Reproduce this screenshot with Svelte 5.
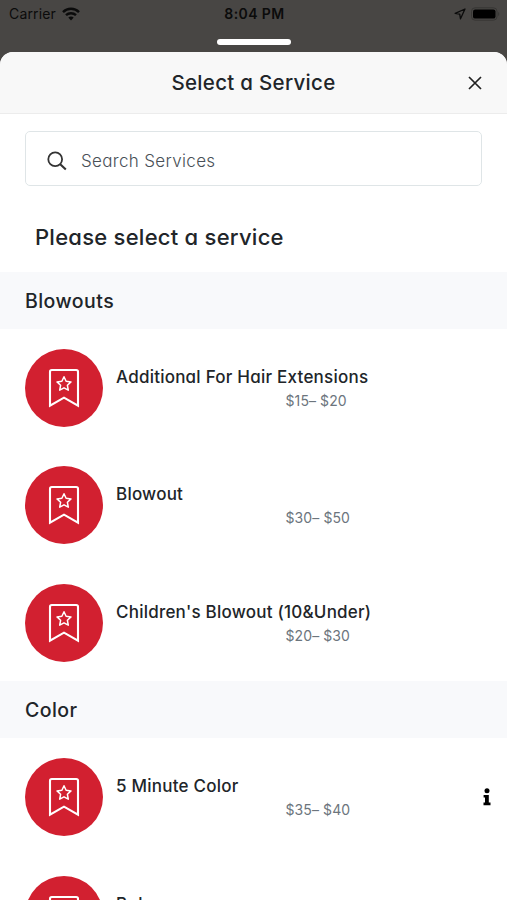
<script lang="ts">
  interface Service {
    name: string;
    price?: string;
    info?: boolean;
  }

  interface ServiceGroup {
    title: string;
    services: Service[];
  }

  const groups: ServiceGroup[] = [
    {
      title: 'Blowouts',
      services: [
        { name: 'Additional For Hair Extensions', price: '$15– $20' },
        { name: 'Blowout', price: '$30– $50' },
        { name: "Children's Blowout (10&Under)", price: '$20– $30' },
      ],
    },
    {
      title: 'Color',
      services: [
        { name: '5 Minute Color', price: '$35– $40', info: true },
        { name: 'Balayage' },
      ],
    },
  ];

  let query = $state('');
</script>

<div class="screen">
  <div class="status-bar">
    <div class="status-left">
      <span class="carrier">Carrier</span>
      <svg width="18" height="14" viewBox="0 0 18 14" fill="none" stroke="#0b0b0b" stroke-width="2.4">
        <path d="M1 5.1C5.4.6 12.6.6 17 5.1" />
        <path d="M4 8.2c2.8-2.7 7.2-2.7 10 0" />
        <path d="M9 13.4 6.3 10.6c1.5-1.4 3.9-1.4 5.4 0z" fill="#0b0b0b" stroke="none" />
      </svg>
    </div>
    <span class="clock">8:04 PM</span>
    <div class="status-right">
      <svg width="12" height="12" viewBox="0 0 12 12" fill="none" stroke="#0b0b0b" stroke-width="1.3" stroke-linejoin="round">
        <path d="M11 1 1.2 5.4l4.5.8.8 4.6z" />
      </svg>
      <svg width="29" height="14" viewBox="0 0 29 14">
        <rect x=".5" y=".8" width="25.5" height="12.4" rx="3.6" fill="none" stroke="#373634" />
        <rect x="2" y="2.4" width="22.5" height="9.2" rx="2.2" fill="#000" />
        <path d="M27.2 5v4c1.4-.7 1.4-3.3 0-4z" fill="#373634" />
      </svg>
    </div>
  </div>
  <div class="grabber"></div>

  <div class="sheet">
    <header class="sheet-header">
      <h1>Select a Service</h1>
      <button class="close" aria-label="Close">
        <svg width="14" height="14" viewBox="0 0 14 14" fill="none" stroke="#222" stroke-width="1.7">
          <path d="M1 1l12 12M13 1 1 13" />
        </svg>
      </button>
    </header>

    <label class="search">
      <svg width="20" height="20" viewBox="0 0 20 20" fill="none" stroke="#333" stroke-width="1.8">
        <circle cx="8.2" cy="8.2" r="6.9" />
        <path d="m13 13 5.8 5.6" stroke-width="2.1" />
      </svg>
      <input type="text" placeholder="Search Services" bind:value={query} />
    </label>

    <h2 class="prompt">Please select a service</h2>

    {#each groups as group}
      <h3 class="group-title">{group.title}</h3>
      {#each group.services as service}
        <div class="service">
          <div class="service-icon">
            <svg width="32" height="40" viewBox="0 0 32 40" fill="none" stroke="#fff" stroke-linejoin="round">
              <path d="M2 37.6V3.8Q2 2 3.8 2h24.4Q30 2 30 3.8v33.8L16 29.6z" stroke-width="2.1" stroke-linejoin="miter" />
              <path d="m16 8.8 2.1 4.5 4.9.6-3.6 3.4.9 4.9-4.3-2.4-4.3 2.4.9-4.9L9 13.9l4.9-.6z" stroke-width="1.5" />
            </svg>
          </div>
          <div class="service-text">
            <span class="service-name">{service.name}</span>
            {#if service.price}
              <span class="service-price">{service.price}</span>
            {/if}
          </div>
          {#if service.info}
            <svg class="info" width="8" height="18" viewBox="0 0 8 18" fill="#000">
              <circle cx="4" cy="2.8" r="2.5" />
              <path d="M.6 6.9h5.2v7.5h1.7v2.8H.5v-2.8H2V9.6H.6z" />
            </svg>
          {/if}
        </div>
      {/each}
    {/each}
  </div>
</div>

<style>
  :global(body) {
    margin: 0;
    overflow: hidden;
  }

  .screen {
    height: 900px;
    box-sizing: border-box;
    display: flex;
    flex-direction: column;
    overflow: hidden;
    background: #484644;
    color: #212529;
    font-family: Inter, 'Open Sans', sans-serif;
    font-feature-settings: 'cv11' 1, 'calt' 0;
  }

  .status-bar {
    display: grid;
    grid-template-columns: 1fr auto 1fr;
    align-items: center;
    height: 27px;
    flex-shrink: 0;
    padding: 0 7px 0 9px;
    font-size: 14px;
    color: #0b0b0b;
    font-feature-settings: normal;
  }

  .status-left, .status-right {
    display: flex;
    align-items: center;
    gap: 6px;
  }

  .carrier {
    letter-spacing: 0.15px;
  }

  .status-right {
    justify-content: flex-end;
    gap: 5px;
  }

  .clock {
    font-weight: 600;
    letter-spacing: 0.4px;
  }

  .grabber {
    width: 74px;
    height: 6px;
    flex-shrink: 0;
    margin: 12px auto 7px;
    border-radius: 3px;
    background: #fff;
  }

  .sheet {
    flex: 1;
    min-height: 0;
    overflow: hidden;
    border-radius: 13px 13px 0 0;
    background: #fff;
  }

  .sheet-header {
    display: grid;
    grid-template-columns: 40px 1fr 40px;
    align-items: center;
    height: 62px;
    box-sizing: border-box;
    padding: 0 12px;
    border-bottom: 1px solid #ececec;
    background: #f8f8f8;
  }

  h1 {
    grid-column: 2;
    margin: 0;
    text-align: center;
    font-size: 20.5px;
    font-weight: 500;
    letter-spacing: 0.3px;
  }

  .close {
    display: flex;
    justify-content: center;
    padding: 0;
    border: 0;
    background: none;
  }

  .search {
    display: flex;
    align-items: center;
    gap: 14px;
    height: 55px;
    box-sizing: border-box;
    margin: 17.3px 25px 0;
    padding: 4px 20px 0 21px;
    border: 1px solid #dfe5e7;
    border-radius: 5px;
  }

  .search input {
    flex: 1;
    min-width: 0;
    padding: 0;
    border: 0;
    outline: 0;
    background: none;
    font: inherit;
    font-size: 17px;
    font-weight: 300;
    letter-spacing: 0.33px;
  }

  .search input::placeholder {
    color: #495057;
  }

  .prompt {
    margin: 0;
    height: 86px;
    line-height: 103px;
    padding-left: 35px;
    font-size: 22px;
    font-weight: 500;
    letter-spacing: 0.25px;
  }

  .group-title {
    margin: 0;
    height: 57px;
    line-height: 58px;
    padding-left: 25px;
    background: #f8f9fb;
    font-size: 19.5px;
    font-weight: 500;
    letter-spacing: 0.45px;
  }

  .service {
    display: flex;
    align-items: center;
    height: 117.4px;
    padding: 0 16px 0 25px;
  }

  .service-icon {
    display: flex;
    align-items: center;
    justify-content: center;
    width: 78px;
    height: 78px;
    border-radius: 50%;
    background: #d22030;
  }

  .service-text {
    flex: 1;
    align-self: flex-start;
    display: flex;
    flex-direction: column;
    padding: 35.7px 0 0 13px;
    line-height: 24px;
  }

  .service-name {
    font-size: 17px;
    font-weight: 500;
    letter-spacing: 0.23px;
  }

  .service-price {
    padding-left: 169.5px;
    font-size: 14px;
    letter-spacing: 0.1px;
    color: #6c757d;
  }
</style>
